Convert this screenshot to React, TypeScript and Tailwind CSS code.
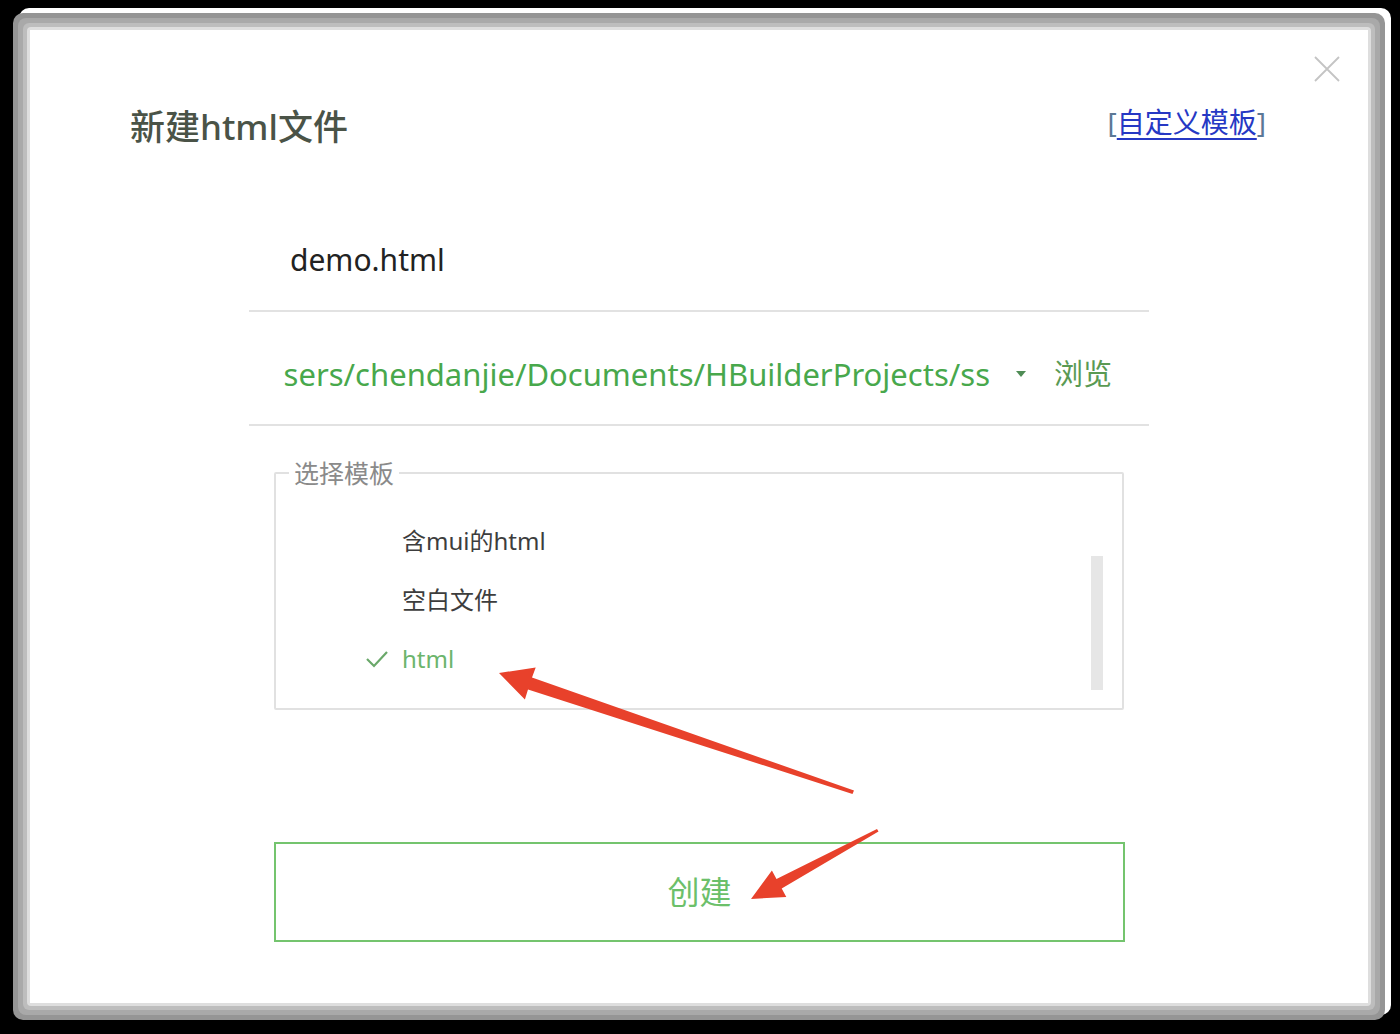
import React from "react";

export default function App() {
  return (
    <div className="relative w-[1400px] h-[1034px] overflow-hidden bg-black pt-[13px] pl-[13px] font-['Noto_Sans','Noto_Sans_CJK_SC',sans-serif]">
      <div className="w-[1372px] h-[1007px] rounded-[10px] bg-[#959595] p-[5px] shadow-[6px_-5px_0_0_#ffffff]">
        <div className="h-full rounded-[8px] bg-[#a9a9a9] p-[5px]">
          <div className="h-full rounded-[6px] bg-[#bdbdbd] p-[4px]">
            <div className="h-full rounded-[4px] bg-[#dedede] p-[3px]">
              <div className="relative flex h-full flex-col bg-white">
                {/* close */}
                <button className="absolute right-[28px] top-[26px] h-[26px] w-[26px]">
                  <svg viewBox="0 0 26 26" className="h-[26px] w-[26px]">
                    <path d="M1 1 L25 25 M25 1 L1 25" stroke="#c4c4c4" strokeWidth="1.8" fill="none" />
                  </svg>
                </button>

                {/* header */}
                <div className="mt-[75px] flex items-start justify-between pl-[100px] pr-[102px]">
                  <h1 className="text-[35px] font-medium leading-[44px] text-[#4a5347]">新建html文件</h1>
                  <div className="text-[28px] leading-[34px] text-[#5b7896]">
                    [<span className="text-[#2638c4] underline decoration-[#2638c4] decoration-[2px] underline-offset-[5px]">自定义模板</span>]
                  </div>
                </div>

                {/* form */}
                <div className="mx-auto flex w-[900px] flex-col">
                  <div className="border-b-2 border-[#e2e2e2] pb-[30px] pl-[41px] pt-[91px]">
                    <div className="text-[30px] leading-[40px] text-[#222222]">demo.html</div>
                  </div>
                  <div className="flex items-center border-b-2 border-[#e2e2e2] pb-[30px] pt-[42px]">
                    <div className="ml-[35px] w-[706px] overflow-hidden whitespace-nowrap">
                      <div className="flex justify-end text-[31px] leading-[40px] text-[#48a84c]">
                        <span className="shrink-0">/Users/chendanjie/Documents/HBuilderProjects/ss</span>
                      </div>
                    </div>
                    <svg viewBox="0 0 10 6" className="ml-[26px] h-[6px] w-[10px]">
                      <path d="M0 0 L10 0 L5 6 Z" fill="#4f8c55" />
                    </svg>
                    <div className="ml-[28px] text-[29px] leading-[40px] text-[#5a9a53]">浏览</div>
                  </div>

                  <fieldset className="mx-[25px] mt-[32px] rounded-[2px] border-2 border-[#e1e1e1] pb-[18px] pr-[19px]">
                    <legend className="ml-[13px] px-[5px] text-[25px] leading-[30px] text-[#8a8a8a]">选择模板</legend>
                    <div className="flex pl-[89px]">
                      <div className="flex flex-1 flex-col pt-[23px]">
                        <div className="flex h-[59px] items-center pl-[37px] text-[24px] text-[#3d3d3d]">含mui的html</div>
                        <div className="flex h-[59px] items-center pl-[37px] text-[24px] text-[#3d3d3d]">空白文件</div>
                        <div className="flex h-[59px] items-center text-[24px] text-[#6cb56c]">
                          <svg viewBox="0 0 24 18" className="mr-[13px] h-[18px] w-[24px]">
                            <path d="M2 9 L9 16 L22 2" stroke="#6aa86a" strokeWidth="2.2" fill="none" />
                          </svg>
                          html
                        </div>
                      </div>
                      <div className="mt-[68px] h-[134px] w-[12px] bg-[#e6e6e6]" />
                    </div>
                  </fieldset>

                  <button className="ml-[25px] mr-[24px] mt-[132px] flex h-[100px] items-center justify-center border-2 border-[#74c46e] text-[32px] text-[#6cc06a]">
                    创建
                  </button>
                </div>
              </div>
            </div>
          </div>
        </div>
      </div>

      {/* annotation arrows */}
      <svg className="pointer-events-none absolute left-0 top-0" width="1400" height="1034">
        <polygon points="499,673 535.7,667.4 532,677.5 854,790.5 852.5,794 528,689.5 524.9,699.6" fill="#e8412b" />
        <polygon points="751,899 771.9,870.5 776.5,878.9 877,829 878.5,831.5 781.7,888.5 786.3,896.9" fill="#e8412b" />
      </svg>
    </div>
  );
}
